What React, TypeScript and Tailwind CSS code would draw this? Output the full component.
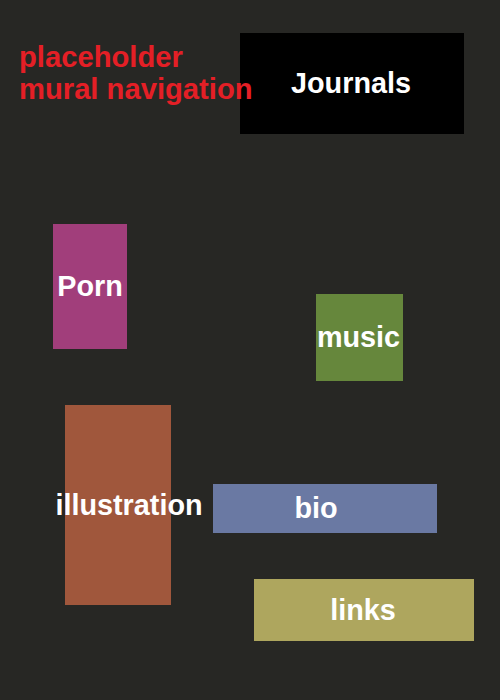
const NODES = [
  { label: 'Journals', box: 'left-[240px] top-[33px] w-[224px] h-[101px] bg-black', text: 'right-[1px]' },
  { label: 'Porn', box: 'left-[53px] top-[224px] w-[74px] h-[125px] bg-[#a13e7b]', text: '' },
  { label: 'music', box: 'left-[316px] top-[294px] w-[87px] h-[87px] bg-[#66873c]', text: 'right-[1px]' },
  { label: 'illustration', box: 'left-[65px] top-[405px] w-[106px] h-[200px] bg-[#a0573c]', text: 'left-[11px]' },
  { label: 'bio', box: 'left-[213px] top-[484px] w-[224px] h-[49px] bg-[#6a79a3]', text: 'right-[9px]' },
  { label: 'links', box: 'left-[254px] top-[579px] w-[220px] h-[62px] bg-[#aea65e]', text: 'right-[1px]' },
];

export default function App() {
  return (
    <div className="relative w-full min-h-screen h-[700px] bg-[#272724] font-['Liberation_Sans',Arial,sans-serif] font-bold overflow-hidden">
      <h1 className="relative z-10 w-fit pt-[41px] pl-[19px] text-[29.2px] leading-[32px] text-[#e41f26]">
        placeholder
        <br />
        mural navigation
      </h1>
      {NODES.map(node => (
        <a
          key={node.label}
          href="#"
          className={`absolute flex items-center justify-center text-white text-[28.8px] leading-none ${node.box}`}
        >
          <span className={`relative whitespace-nowrap ${node.text}`}>{node.label}</span>
        </a>
      ))}
    </div>
  );
}
